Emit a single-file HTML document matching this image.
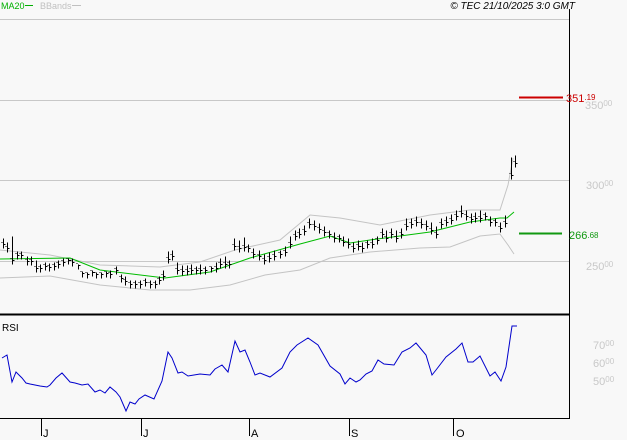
<!DOCTYPE html>
<html><head><meta charset="utf-8"><style>
body{margin:0;background:#f8f8f8;}
svg{display:block;font-family:"Liberation Sans",sans-serif;}
</style></head><body>
<svg width="627" height="440" viewBox="0 0 627 440" xmlns="http://www.w3.org/2000/svg">
<rect width="627" height="440" fill="#f8f8f8"/>
<g stroke="#c8c8c8" stroke-width="1">
<line x1="0" y1="19.5" x2="569" y2="19.5"/>
<line x1="0" y1="100.5" x2="569" y2="100.5"/>
<line x1="0" y1="180.5" x2="569" y2="180.5"/>
<line x1="0" y1="261.5" x2="569" y2="261.5"/>
</g>
<line x1="569.5" y1="9" x2="569.5" y2="419" stroke="#000"/>
<line x1="0" y1="314.5" x2="570" y2="314.5" stroke="#000" stroke-width="2"/>
<line x1="0" y1="418.5" x2="570" y2="418.5" stroke="#000"/>
<g stroke="#000"><line x1="41.5" y1="419" x2="41.5" y2="436"/><line x1="141.5" y1="419" x2="141.5" y2="436"/><line x1="249.5" y1="419" x2="249.5" y2="436"/><line x1="349.5" y1="419" x2="349.5" y2="436"/><line x1="453.5" y1="419" x2="453.5" y2="436"/></g>
<g font-size="11" fill="#000"><text x="43" y="437">J</text><text x="143" y="437">J</text><text x="251" y="437">A</text><text x="351" y="437">S</text><text x="456" y="437">O</text></g>
<text x="1" y="9" font-size="9" fill="#00b000">MA20</text><line x1="25" y1="5.5" x2="33" y2="5.5" stroke="#00b000"/>
<text x="40" y="9" font-size="9" fill="#c0c0c0">BBands</text><line x1="72" y1="5.5" x2="81" y2="5.5" stroke="#c0c0c0"/>
<text x="575" y="9" font-size="10" font-style="italic" text-anchor="end" fill="#000">© TEC 21/10/2025 3:0 GMT</text>
<g fill="#c8c8c8" font-size="11"><text x="585" y="109">350<tspan font-size="8" dy="-3">00</tspan></text><text x="586" y="189">300<tspan font-size="8" dy="-3">00</tspan></text><text x="586" y="270">250<tspan font-size="8" dy="-3">00</tspan></text>
<text x="593" y="349">70<tspan font-size="8" dy="-3">00</tspan></text><text x="593" y="367">60<tspan font-size="8" dy="-3">00</tspan></text><text x="593" y="385">50<tspan font-size="8" dy="-3">00</tspan></text></g>
<line x1="519" y1="97.5" x2="563" y2="97.5" stroke="#cc0000" stroke-width="2"/>
<text x="566" y="102" font-size="11" fill="#cc0000">351<tspan font-size="8" dy="-2">.19</tspan></text>
<line x1="519" y1="233.5" x2="562" y2="233.5" stroke="#119911" stroke-width="2"/>
<text x="569" y="239" font-size="11" fill="#119911">266<tspan font-size="8" dy="-1">.68</tspan></text>
<text x="2" y="331" font-size="10" fill="#000">RSI</text>
<polyline fill="none" stroke="#c4c4c4" points="0,250 50,255 100,265 160,267 200,262 235,250 280,240 310,215 340,218 380,225 430,215 470,210 500,210 508,185 513,158"/>
<polyline fill="none" stroke="#c4c4c4" points="0,278 50,276 100,285 150,290 190,290 230,285 265,275 300,270 330,258 370,252 420,248 450,247 480,236 500,234 508,245 514,254"/>
<polyline fill="none" stroke="#00bb00" points="0,259 70,258 80,262 100,270 165,278 210,272 250,258 300,244 330,236 350,243 370,240 400,236 430,232 470,222 500,218 507,218 514,212"/>
<path stroke="#000" fill="none" transform="translate(0.5,0.5)" d="M3,238v10m0,-4h2m-3,-2h-1M7,242v10m0,-4h2m-3,-2h-1M12,236v28m0,-4h2m-3,-2h-1M17,251v8m0,-4h2m-3,-2h-1M21,251v8m0,-4h2m-3,-2h-1M27,256v9m0,-4h2m-3,-2h-1M31,256v9m0,-4h2m-3,-2h-1M36,260v12m0,-4h2m-3,-2h-1M40,264v8m0,-4h2m-3,-2h-1M45,262v8m0,-4h2m-3,-2h-1M49,263v8m0,-4h2m-3,-2h-1M54,262v8m0,-4h2m-3,-2h-1M58,260v8m0,-4h2m-3,-2h-1M63,258v8m0,-4h2m-3,-2h-1M68,258v6m0,-4h2m-3,-2h-1M72,258v8m0,-4h2m-3,-2h-1M78,264v5m0,-4h2m-3,-2h-1M82,271v6m0,-4h2m-3,-2h-1M87,272v6m0,-4h2m-3,-2h-1M92,270v6m0,-4h2m-3,-2h-1M96,272v6m0,-4h2m-3,-2h-1M101,272v6m0,-4h2m-3,-2h-1M106,271v6m0,-4h2m-3,-2h-1M110,270v8m0,-4h2m-3,-2h-1M116,266v8m0,-4h2m-3,-2h-1M121,274v8m0,-4h2m-3,-2h-1M125,276v9m0,-4h2m-3,-2h-1M130,280v8m0,-4h2m-3,-2h-1M135,280v8m0,-4h2m-3,-2h-1M140,280v8m0,-4h2m-3,-2h-1M145,278v8m0,-4h2m-3,-2h-1M150,280v8m0,-4h2m-3,-2h-1M155,280v8m0,-4h2m-3,-2h-1M159,276v8m0,-4h2m-3,-2h-1M163,270v10m0,-4h2m-3,-2h-1M168,251v12m0,-4h2m-3,-2h-1M172,250v10m0,-4h2m-3,-2h-1M177,262v12m0,-4h2m-3,-2h-1M182,265v10m0,-4h2m-3,-2h-1M187,265v10m0,-4h2m-3,-2h-1M191,264v10m0,-4h2m-3,-2h-1M196,266v8m0,-4h2m-3,-2h-1M200,264v10m0,-4h2m-3,-2h-1M205,266v8m0,-4h2m-3,-2h-1M211,266v6m0,-4h2m-3,-2h-1M216,262v10m0,-4h2m-3,-2h-1M220,258v10m0,-4h2m-3,-2h-1M225,256v12m0,-4h2m-3,-2h-1M229,260v8m0,-4h2m-3,-2h-1M234,238v12m0,-4h2m-3,-2h-1M239,240v12m0,-4h2m-3,-2h-1M244,237v14m0,-4h2m-3,-2h-1M248,244v8m0,-4h2m-3,-2h-1M253,248v10m0,-4h2m-3,-2h-1M259,250v10m0,-4h2m-3,-2h-1M264,254v10m0,-4h2m-3,-2h-1M269,252v10m0,-4h2m-3,-2h-1M274,250v10m0,-4h2m-3,-2h-1M280,250v8m0,-4h2m-3,-2h-1M285,246v10m0,-4h2m-3,-2h-1M290,236v12m0,-4h2m-3,-2h-1M295,230v10m0,-4h2m-3,-2h-1M299,228v10m0,-4h2m-3,-2h-1M304,225v10m0,-4h2m-3,-2h-1M309,218v10m0,-4h2m-3,-2h-1M314,220v10m0,-4h2m-3,-2h-1M319,223v10m0,-4h2m-3,-2h-1M324,226v10m0,-4h2m-3,-2h-1M329,230v8m0,-4h2m-3,-2h-1M334,232v10m0,-4h2m-3,-2h-1M339,234v8m0,-4h2m-3,-2h-1M343,236v10m0,-4h2m-3,-2h-1M348,238v10m0,-4h2m-3,-2h-1M353,242v10m0,-4h2m-3,-2h-1M358,240v10m0,-4h2m-3,-2h-1M362,242v10m0,-4h2m-3,-2h-1M367,240v8m0,-4h2m-3,-2h-1M372,238v10m0,-4h2m-3,-2h-1M377,236v8m0,-4h2m-3,-2h-1M382,228v10m0,-4h2m-3,-2h-1M386,230v12m0,-4h2m-3,-2h-1M391,228v10m0,-4h2m-3,-2h-1M396,230v12m0,-4h2m-3,-2h-1M401,228v10m0,-4h2m-3,-2h-1M406,218v12m0,-4h2m-3,-2h-1M411,218v10m0,-4h2m-3,-2h-1M416,216v10m0,-4h2m-3,-2h-1M421,218v10m0,-4h2m-3,-2h-1M426,220v10m0,-4h2m-3,-2h-1M431,222v12m0,-4h2m-3,-2h-1M436,226v12m0,-4h2m-3,-2h-1M441,218v10m0,-4h2m-3,-2h-1M446,216v10m0,-4h2m-3,-2h-1M451,214v10m0,-4h2m-3,-2h-1M456,210v10m0,-4h2m-3,-2h-1M461,205v12m0,-4h2m-3,-2h-1M466,210v10m0,-4h2m-3,-2h-1M471,213v10m0,-4h2m-3,-2h-1M475,212v10m0,-4h2m-3,-2h-1M480,210v12m0,-4h2m-3,-2h-1M485,212v8m0,-4h2m-3,-2h-1M490,216v10m0,-4h2m-3,-2h-1M495,218v8m0,-4h2m-3,-2h-1M500,222v10m0,-4h2m-3,-2h-1M505,215v12m0,-4h2m-3,-2h-1M511,157v22m0,-4h2m-3,-2h-1M515,155v12m0,-4h2m-3,-2h-1"/>
<polyline fill="none" stroke="#0000cc" points="2,358 7,355 12,382 16,372 22,378 26,383 30,384 40,386 47,387 50,385 56,378 62,373 70,382 75,383 82,385 88,384 95,392 100,390 105,393 110,387 116,392 120,397 126,411 130,402 135,404 139,399 145,395 154,399 162,381 168,352 172,358 178,373 182,372 188,376 200,374 210,375 215,369 222,365 228,372 235,341 240,352 245,350 250,362 255,375 260,373 270,377 282,368 290,352 297,345 308,338 318,345 330,366 340,374 345,384 350,378 356,382 360,380 366,374 372,371 378,360 384,364 394,365 402,352 410,348 416,343 426,355 432,375 436,370 446,357 456,349 462,343 468,362 473,362 480,356 490,376 495,372 501,381 506,367 512,326 517,326"/>
</svg>
</body></html>
